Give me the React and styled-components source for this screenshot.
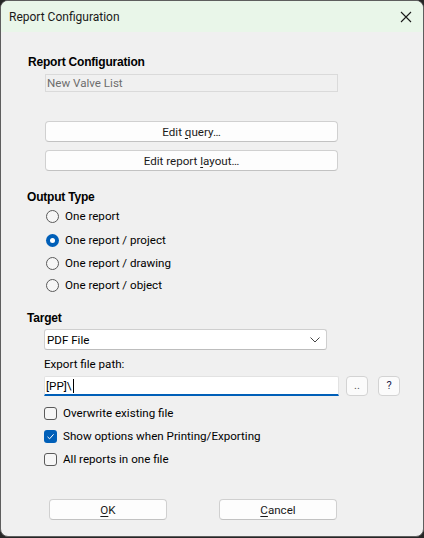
import React from "react";
import styled, { createGlobalStyle } from "styled-components";

const Global = createGlobalStyle`
  html, body { margin: 0; padding: 0; background: #262626; }
  body { width: 424px; height: 538px; overflow: hidden; }
  * { box-sizing: border-box; }
`;

const Window = styled.div`
  width: 424px;
  height: 537px;
  background: #f0f0f0;
  border: 1px solid #5e5e5e;
  border-radius: 8px;
  overflow: hidden;
  display: flex;
  flex-direction: column;
  font-family: "Roboto", "Segoe UI", sans-serif;
  font-size: 11.6px;
  line-height: 16px;
  color: #000;
`;

const TitleBar = styled.div`
  height: 31px;
  flex: none;
  background: #e9f6e9;
  display: flex;
  align-items: center;
  justify-content: space-between;
  padding: 0 9px 0 8px;
`;

const Title = styled.span`
  font-size: 12px;
  color: #1a1a1a;
`;

const CloseBtn = styled.div`
  width: 12px;
  height: 12px;
  display: flex;
  margin-right: 2px;
`;

const Body = styled.div`
  display: flex;
  flex-direction: column;
  padding-left: 26px;
`;

const Heading = styled.div`
  font-family: "Liberation Sans", Arial, sans-serif;
  font-weight: bold;
  font-size: 12px;
  line-height: 16px;
  height: 16px;
  margin-top: ${(p) => p.$mt}px;
  margin-left: ${(p) => p.$ml || 0}px;
  letter-spacing: -0.2px;
`;

const DisabledField = styled.div`
  margin-top: ${(p) => p.$mt}px;
  margin-left: 18px;
  width: 293px;
  height: 18px;
  border: 1px solid #dadada;
  background: #f0f0f0;
  color: #6d6d6d;
  display: flex;
  align-items: center;
  padding-left: 1px;
`;

const PushButton = styled.div`
  margin-top: ${(p) => p.$mt || 0}px;
  margin-left: ${(p) => p.$ml || 0}px;
  width: ${(p) => p.$w}px;
  height: ${(p) => p.$h || 21}px;
  background: #fdfdfd;
  border: 1px solid #d0d0d0;
  border-bottom-color: #c2c2c2;
  border-radius: 4px;
  display: flex;
  align-items: center;
  justify-content: center;
  color: #1a1a1a;
  flex: none;
`;

const U = styled.span`
  text-decoration: underline;
  text-underline-offset: 2px;
`;

const OptionRow = styled.div`
  margin-top: ${(p) => p.$mt}px;
  margin-left: ${(p) => p.$ml}px;
  height: 16px;
  display: flex;
  align-items: center;
  gap: 6px;
`;

const RadioCircle = styled.span`
  width: 13px;
  height: 13px;
  border-radius: 50%;
  flex: none;
  border: ${(p) => (p.$on ? "none" : "1px solid #5a5a5a")};
  background: ${(p) => (p.$on ? "#005fb8" : "#f6f6f6")};
  display: flex;
  align-items: center;
  justify-content: center;
  &::after {
    content: "";
    display: ${(p) => (p.$on ? "block" : "none")};
    width: 5px;
    height: 5px;
    border-radius: 50%;
    background: #fff;
  }
`;

const CheckBox = styled.span`
  width: 13px;
  height: 13px;
  border-radius: 3px;
  flex: none;
  border: ${(p) => (p.$on ? "none" : "1px solid #5a5a5a")};
  background: ${(p) => (p.$on ? "#005fb8" : "#f6f6f6")};
  display: flex;
  align-items: center;
  justify-content: center;
`;

const Combo = styled.div`
  margin-top: ${(p) => p.$mt}px;
  margin-left: 17px;
  width: 283px;
  height: 21px;
  background: #fff;
  border: 1px solid #cfcfcf;
  border-bottom-color: #bdbdbd;
  border-radius: 3px;
  display: flex;
  align-items: center;
  justify-content: space-between;
  padding: 0 6px 0 2px;
`;

const Label = styled.div`
  margin-top: ${(p) => p.$mt}px;
  margin-left: 17px;
  height: 16px;
  line-height: 16px;
`;

const PathRow = styled.div`
  margin-top: ${(p) => p.$mt}px;
  margin-left: 17px;
  display: flex;
  align-items: flex-start;
`;

const TextInput = styled.div`
  width: 295px;
  height: 20px;
  background: #fff;
  border: 1px solid #e2e2e2;
  border-bottom: 2px solid #005fb8;
  border-radius: 2px 2px 0 0;
  display: flex;
  align-items: center;
  padding-left: 1px;
`;

const Caret = styled.span`
  display: inline-block;
  width: 1px;
  height: 14px;
  background: #000;
  margin-left: 1px;
`;

const SmallButton = styled.div`
  margin-left: ${(p) => p.$ml}px;
  width: 22px;
  height: 20px;
  background: #fbfbfb;
  border: 1px solid #d3d3d3;
  border-radius: 4px;
  display: flex;
  align-items: center;
  justify-content: center;
  color: ${(p) => p.$c || "#1a1a1a"};
  font-size: 11px;
`;

const Footer = styled.div`
  margin-top: 32px;
  margin-left: 22px;
  display: flex;
  gap: 52px;
`;

function Radio({ on, children, mt }) {
  return (
    <OptionRow $mt={mt} $ml={19}>
      <RadioCircle $on={on} />
      <span>{children}</span>
    </OptionRow>
  );
}

function Check({ on, children, mt }) {
  return (
    <OptionRow $mt={mt} $ml={17}>
      <CheckBox $on={on}>
        {on && (
          <svg width="9" height="9" viewBox="0 0 9 9">
            <path d="M1.5 4.8 L3.6 6.8 L7.6 2.3" fill="none" stroke="#fff" strokeWidth="1" />
          </svg>
        )}
      </CheckBox>
      <span>{children}</span>
    </OptionRow>
  );
}

export default function App() {
  return (
    <>
      <Global />
      <Window>
        <TitleBar>
          <Title>Report Configuration</Title>
          <CloseBtn>
            <svg width="12" height="12" viewBox="0 0 12 12">
              <path d="M1 1 L11 11 M11 1 L1 11" stroke="#1a1a1a" strokeWidth="1.1" />
            </svg>
          </CloseBtn>
        </TitleBar>
        <Body>
          <Heading $mt={22} $ml={1}>Report Configuration</Heading>
          <DisabledField $mt={4}>New Valve List</DisabledField>
          <PushButton $mt={29} $ml={18} $w={293}>
            Edit&nbsp;<U>q</U>uery…
          </PushButton>
          <PushButton $mt={8} $ml={18} $w={293}>
            Edit report&nbsp;<U>l</U>ayout…
          </PushButton>
          <Heading $mt={18}>Output Type</Heading>
          <Radio mt={3}>One report</Radio>
          <Radio on mt={8}>One report / project</Radio>
          <Radio mt={7}>One report / drawing</Radio>
          <Radio mt={6}>One report / object</Radio>
          <Heading $mt={17}>Target</Heading>
          <Combo $mt={3}>
            <span>PDF File</span>
            <svg width="10" height="6" viewBox="0 0 10 6">
              <path d="M0.5 0.5 L5 5 L9.5 0.5" fill="none" stroke="#444" strokeWidth="1" />
            </svg>
          </Combo>
          <Label $mt={6}>Export file path:</Label>
          <PathRow $mt={4}>
            <TextInput>
              <span>[PP]\</span>
              <Caret />
            </TextInput>
            <SmallButton $ml={7} $c="#555">..</SmallButton>
            <SmallButton $ml={10} $c="#1a1a4a">?</SmallButton>
          </PathRow>
          <Check mt={9}>Overwrite existing file</Check>
          <Check on mt={7}>Show options when Printing/Exporting</Check>
          <Check mt={7}>All reports in one file</Check>
          <Footer>
            <PushButton $w={118}>
              <U>O</U>K
            </PushButton>
            <PushButton $w={118}>
              <U>C</U>ancel
            </PushButton>
          </Footer>
        </Body>
      </Window>
    </>
  );
}
